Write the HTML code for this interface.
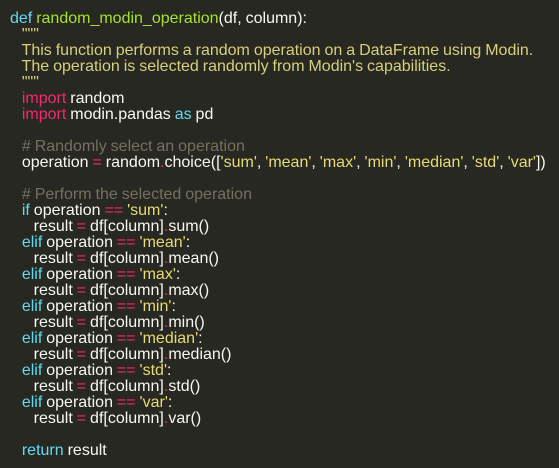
<!DOCTYPE html>
<html><head><meta charset="utf-8"><style>
html,body{margin:0;padding:0;background:#272822;width:559px;height:468px;overflow:hidden}
pre{margin:0;padding:11px 0 0 10px;font-family:"Liberation Sans",sans-serif;font-size:16px;line-height:16px;color:#f8f8f2;word-spacing:-0.5px}
.k{color:#f92672}.d{color:#66d9ef}.f{color:#a6e22e}.s{color:#e6db74}.c{color:#75715e}.doc{color:#d8cf7c}
</style></head><body><pre><span class="d">def</span> <span class="f">random_modin_operation</span>(df, column):
   <span class="doc">"""</span>
   <span class="doc">This function performs a random operation on a DataFrame using Modin.</span>
   <span class="doc">The operation is selected randomly from Modin's capabilities.</span>
   <span class="doc">"""</span>
   <span class="k">import</span> random
   <span class="k">import</span> modin.pandas <span class="d">as</span> pd

   <span class="c"># Randomly select an operation</span>
   operation <span class="k">=</span> random<span class="k">.</span>choice([<span class="s">'sum'</span>, <span class="s">'mean'</span>, <span class="s">'max'</span>, <span class="s">'min'</span>, <span class="s">'median'</span>, <span class="s">'std'</span>, <span class="s">'var'</span>])

   <span class="c"># Perform the selected operation</span>
   <span class="d">if</span> operation <span class="k">==</span> <span class="s">'sum'</span>:
      result <span class="k">=</span> df[column]<span class="k">.</span>sum()
   <span class="d">elif</span> operation <span class="k">==</span> <span class="s">'mean'</span>:
      result <span class="k">=</span> df[column]<span class="k">.</span>mean()
   <span class="d">elif</span> operation <span class="k">==</span> <span class="s">'max'</span>:
      result <span class="k">=</span> df[column]<span class="k">.</span>max()
   <span class="d">elif</span> operation <span class="k">==</span> <span class="s">'min'</span>:
      result <span class="k">=</span> df[column]<span class="k">.</span>min()
   <span class="d">elif</span> operation <span class="k">==</span> <span class="s">'median'</span>:
      result <span class="k">=</span> df[column]<span class="k">.</span>median()
   <span class="d">elif</span> operation <span class="k">==</span> <span class="s">'std'</span>:
      result <span class="k">=</span> df[column]<span class="k">.</span>std()
   <span class="d">elif</span> operation <span class="k">==</span> <span class="s">'var'</span>:
      result <span class="k">=</span> df[column]<span class="k">.</span>var()

   <span class="d">return</span> result</pre></body></html>
